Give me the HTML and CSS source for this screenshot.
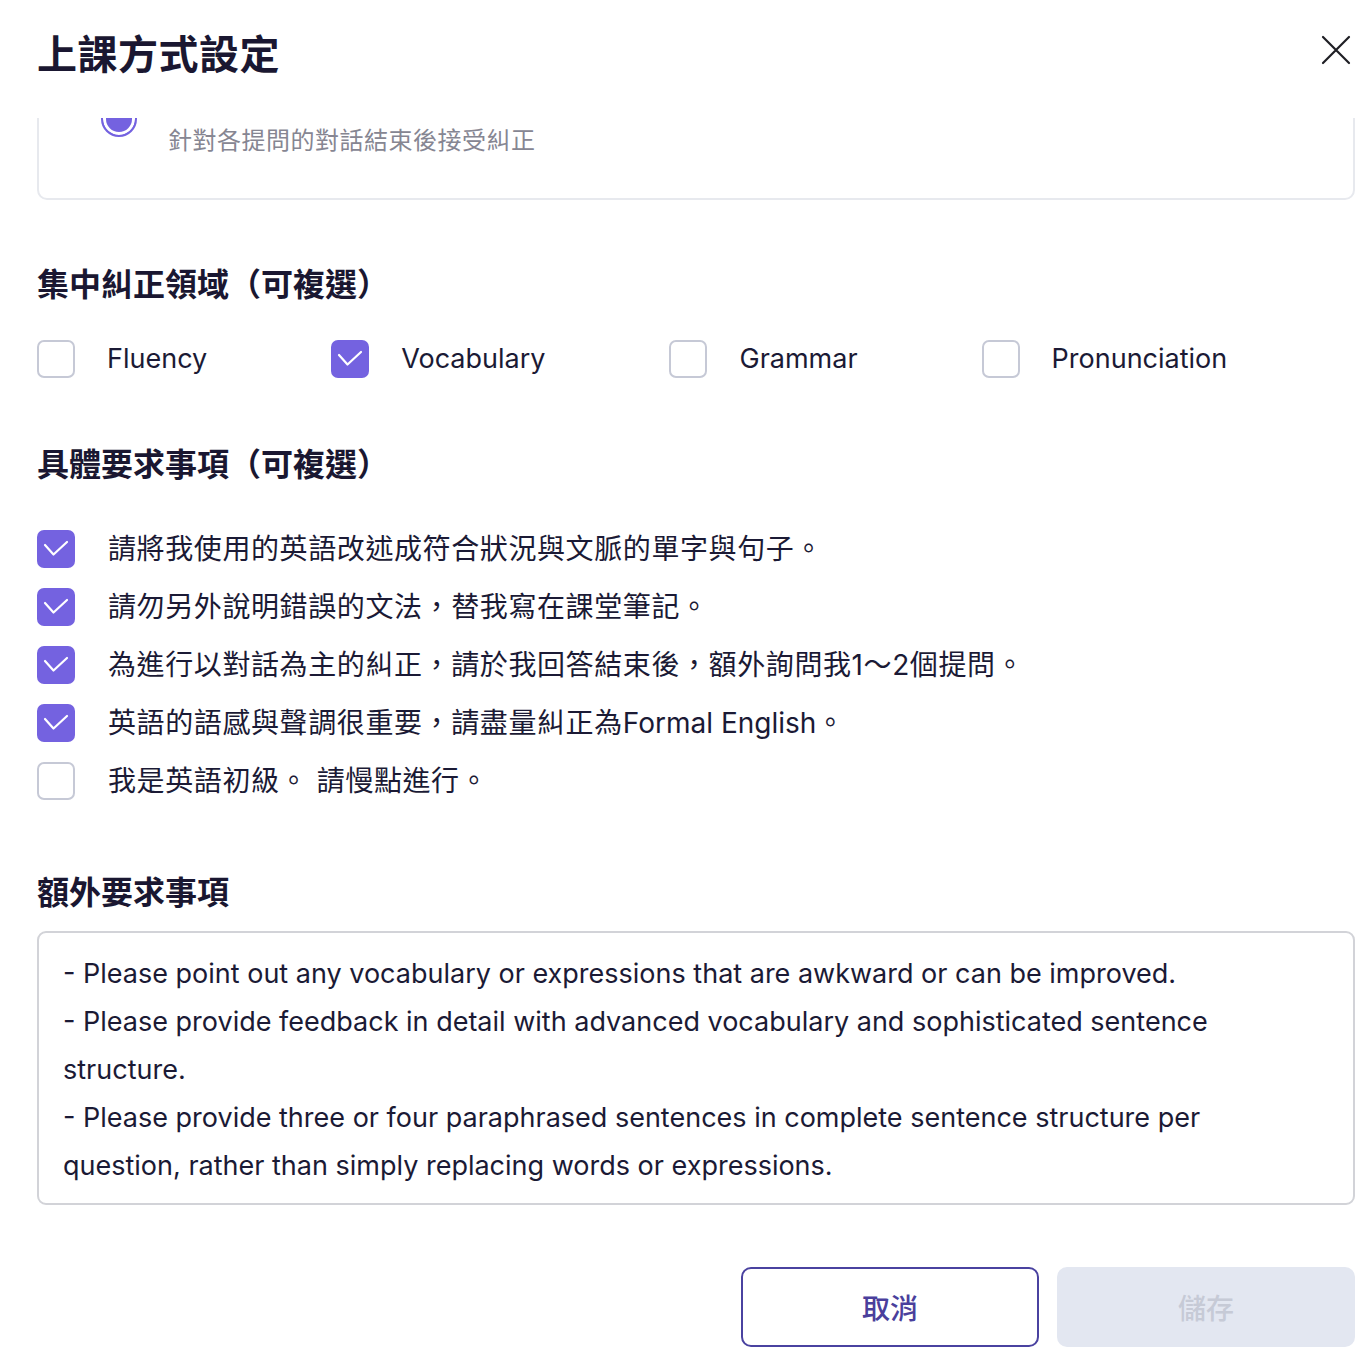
FILE: index.html
```html
<!DOCTYPE html>
<html lang="zh-Hant">
<head>
<meta charset="utf-8">
<title>上課方式設定</title>
<link rel="stylesheet" href="styles.css">
</head>
<body>
<div class="modal">
  <header class="modal-header">
    <h1 class="modal-title">上課方式設定</h1>
    <button class="close-btn" aria-label="close">
      <svg width="30" height="30" viewBox="0 0 30 30"><path d="M2 2 L28 28 M28 2 L2 28" stroke="#1f1f24" stroke-width="2.2" stroke-linecap="round" fill="none"/></svg>
    </button>
  </header>
  <div class="modal-body">
    <div class="scroll-content">
      <div class="option-card">
        <div class="option-row">
          <span class="radio"></span>
          <p class="option-desc">針對各提問的對話結束後接受糾正</p>
        </div>
      </div>

      <h2 class="section-title first">集中糾正領域（可複選）</h2>
      <div class="focus-row">
        <label class="check-item"><span class="box"></span><span class="label">Fluency</span></label>
        <label class="check-item"><span class="box checked"><svg width="38" height="38" viewBox="0 0 38 38"><path d="M8 15 L16.5 24.5 L30 12" stroke="#fff" stroke-width="2.2" fill="none" stroke-linecap="round" stroke-linejoin="round"/></svg></span><span class="label">Vocabulary</span></label>
        <label class="check-item"><span class="box"></span><span class="label">Grammar</span></label>
        <label class="check-item"><span class="box"></span><span class="label">Pronunciation</span></label>
      </div>

      <h2 class="section-title second">具體要求事項（可複選）</h2>
      <div class="req-list">
        <label class="check-item"><span class="box checked"><svg width="38" height="38" viewBox="0 0 38 38"><path d="M8 15 L16.5 24.5 L30 12" stroke="#fff" stroke-width="2.2" fill="none" stroke-linecap="round" stroke-linejoin="round"/></svg></span><span class="label">請將我使用的英語改述成符合狀況與文脈的單字與句子。</span></label>
        <label class="check-item"><span class="box checked"><svg width="38" height="38" viewBox="0 0 38 38"><path d="M8 15 L16.5 24.5 L30 12" stroke="#fff" stroke-width="2.2" fill="none" stroke-linecap="round" stroke-linejoin="round"/></svg></span><span class="label">請勿另外說明錯誤的文法，替我寫在課堂筆記。</span></label>
        <label class="check-item"><span class="box checked"><svg width="38" height="38" viewBox="0 0 38 38"><path d="M8 15 L16.5 24.5 L30 12" stroke="#fff" stroke-width="2.2" fill="none" stroke-linecap="round" stroke-linejoin="round"/></svg></span><span class="label">為進行以對話為主的糾正，請於我回答結束後，額外詢問我1～2個提問。</span></label>
        <label class="check-item"><span class="box checked"><svg width="38" height="38" viewBox="0 0 38 38"><path d="M8 15 L16.5 24.5 L30 12" stroke="#fff" stroke-width="2.2" fill="none" stroke-linecap="round" stroke-linejoin="round"/></svg></span><span class="label">英語的語感與聲調很重要，請盡量糾正為<span class="latin">Formal English</span>。</span></label>
        <label class="check-item"><span class="box"></span><span class="label">我是英語初級。 請慢點進行。</span></label>
      </div>

      <h2 class="section-title third">額外要求事項</h2>
      <div class="textarea">- Please point out any vocabulary or expressions that are awkward or can be improved.<br>- Please provide feedback in detail with advanced vocabulary and sophisticated sentence structure.<br>- Please provide three or four paraphrased sentences in complete sentence structure per question, rather than simply replacing words or expressions.</div>

      <div class="actions">
        <button class="btn btn-cancel">取消</button>
        <button class="btn btn-save" disabled>儲存</button>
      </div>
    </div>
  </div>
</div>
</body>
</html>
```

FILE: styles.css
```css
* { box-sizing: border-box; }
html, body { margin: 0; padding: 0; background: #fff; }
body {
  font-family: Inter, "Noto Sans CJK TC", "Noto Sans", sans-serif;
  color: #1b1a35;
}
.modal {
  width: 1370px;
  height: 1352px;
  display: flex;
  flex-direction: column;
  overflow: hidden;
}
.modal-header {
  height: 118px;
  flex: none;
  display: flex;
  align-items: flex-start;
  justify-content: space-between;
  padding: 27px 19px 0 37px;
  background: #fff;
}
.modal-title {
  margin: 0;
  font-size: 40px;
  line-height: 56px;
  font-weight: 700;
  color: #1a1731;
  letter-spacing: 0.5px;
}
.close-btn {
  border: none;
  background: none;
  padding: 0;
  margin-top: 8px;
  width: 30px;
  height: 30px;
  cursor: pointer;
}
.modal-body {
  flex: 1;
  overflow: hidden;
  padding: 0 15px 0 37px;
}
.scroll-content {
  margin-top: -58px;
}
.option-card {
  border: 2px solid #e7e9ee;
  border-radius: 10px;
  padding: 63px 24px 41px 62px;
}
.option-row {
  display: flex;
  align-items: flex-start;
  gap: 31px;
}
.radio {
  flex: none;
  width: 36px;
  height: 36px;
  margin-top: -24px;
  border-radius: 50%;
  border: 2.5px solid #7462e0;
  background: #7462e0;
  box-shadow: inset 0 0 0 3px #fff;
}
.option-desc {
  margin: 0;
  font-size: 24px;
  line-height: 32px;
  letter-spacing: 0.5px;
  color: #868692;
}
.section-title {
  margin: 0;
  font-size: 32px;
  line-height: 44px;
  font-weight: 700;
  color: #1a1731;
}
.section-title.first { margin-top: 63px; }
.section-title.second { margin-top: 65px; }
.section-title.third { margin-top: 71px; }
.focus-row {
  display: flex;
  gap: 124px;
  margin-top: 33px;
}
.check-item {
  display: flex;
  align-items: center;
  gap: 33px;
  height: 38px;
}
.focus-row .check-item {
  gap: 32px;
}
.box {
  flex: none;
  width: 38px;
  height: 38px;
  border: 2px solid #c6c9d6;
  border-radius: 7px;
  background: #fff;
  display: flex;
  align-items: center;
  justify-content: center;
}
.box.checked {
  border: none;
  background: #7462e0;
}
.label {
  font-size: 27px;
  line-height: 38px;
  color: #1b1a35;
  white-space: nowrap;
}
.req-list {
  display: flex;
  flex-direction: column;
  gap: 20px;
  margin-top: 43px;
}
.req-list .label {
  font-size: 28px;
  letter-spacing: 0.6px;
}
.req-list .latin {
  letter-spacing: 0;
}
.textarea {
  margin-top: 16px;
  height: 274px;
  border: 2px solid #d2d3d8;
  border-radius: 9px;
  padding: 17px 110px 13px 24px;
  font-size: 27px;
  line-height: 48px;
  color: #1b1a35;
}
.actions {
  display: flex;
  justify-content: flex-end;
  gap: 18px;
  margin-top: 62px;
}
.btn {
  width: 298px;
  height: 80px;
  border-radius: 10px;
  font-family: inherit;
  font-size: 28px;
  font-weight: 500;
}
.btn-cancel {
  background: #fff;
  border: 2px solid #4a42a0;
  color: #4a3f9c;
}
.btn-save {
  background: #e3e7f1;
  border: none;
  color: #c6cad6;
}
```
